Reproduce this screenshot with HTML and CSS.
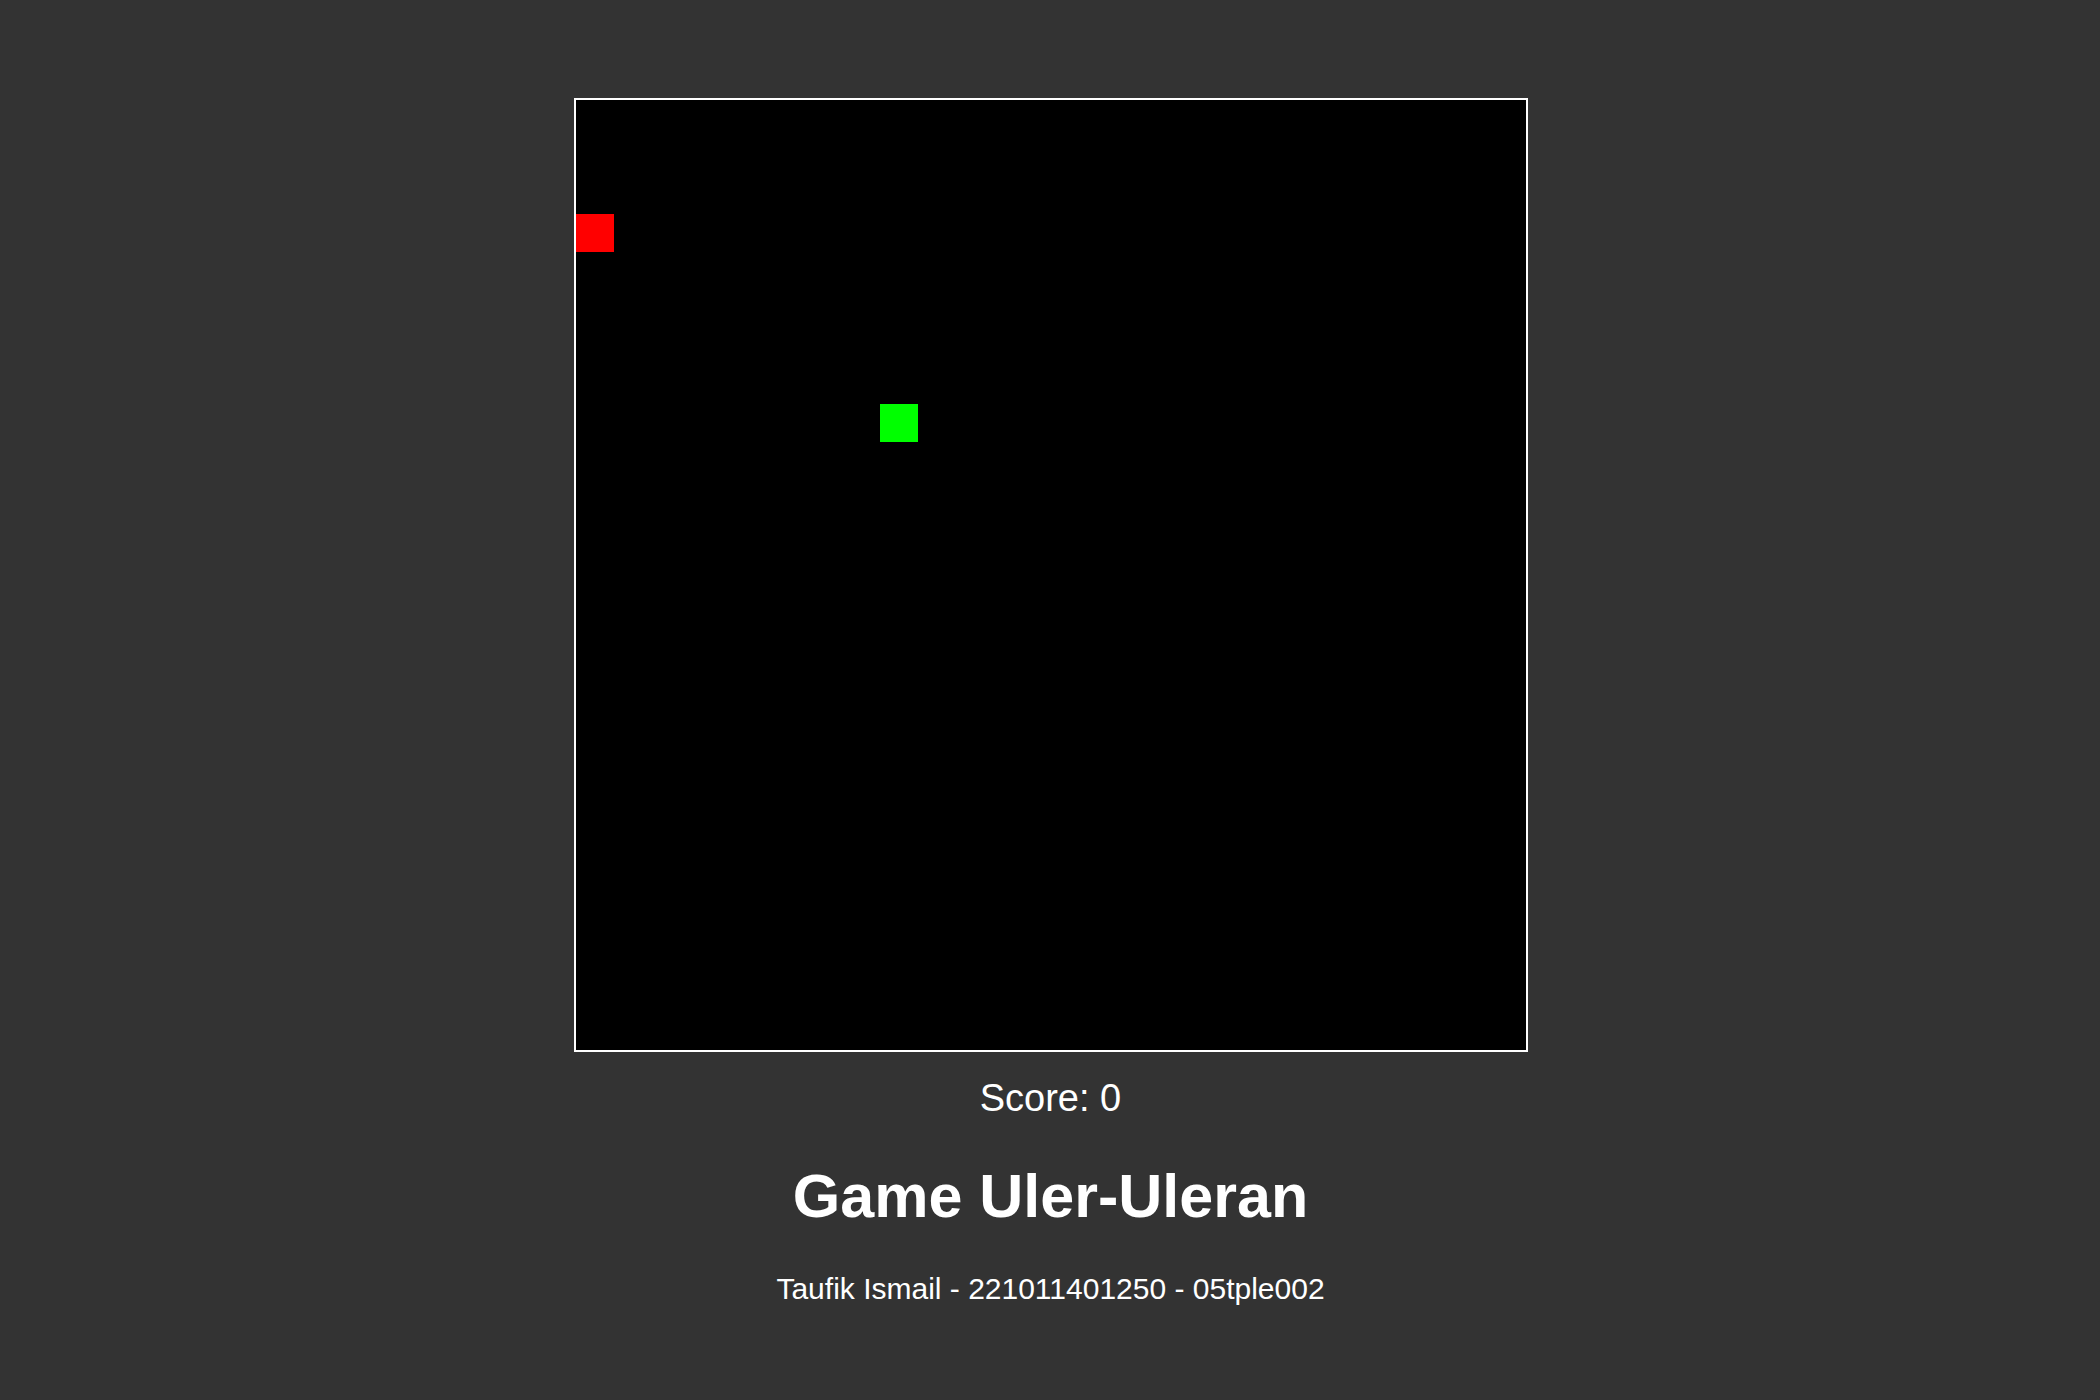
FILE: index.html
```html
<!DOCTYPE html>
<html lang="id">
<head>
<meta charset="utf-8">
<title>Game Uler-Uleran</title>
<link rel="stylesheet" href="styles.css">
</head>
<body>
<main class="page">
  <div class="board">
    <div class="cell food"></div>
    <div class="cell snake"></div>
  </div>
  <div class="score">Score: 0</div>
  <h1 class="title">Game Uler-Uleran</h1>
  <p class="credit">Taufik Ismail - 221011401250 - 05tple002</p>
</main>
</body>
</html>
```
FILE: styles.css
```css
html, body {
  margin: 0;
  padding: 0;
  background: #333333;
}
body {
  font-family: "Liberation Sans", Arial, sans-serif;
  color: #ffffff;
  width: 2100px;
  height: 1400px;
  overflow: hidden;
}
.page {
  display: flex;
  flex-direction: column;
  align-items: center;
  padding-top: 98px;
  padding-left: 1px;
}
.board {
  width: 950px;
  height: 950px;
  background: #000000;
  border: 2px solid #ffffff;
  display: grid;
  grid-template-columns: repeat(25, 38px);
  grid-template-rows: repeat(25, 38px);
}
.cell {
  width: 38px;
  height: 38px;
}
.food {
  background: #ff0000;
  grid-column: 1;
  grid-row: 4;
}
.snake {
  background: #00ff00;
  grid-column: 9;
  grid-row: 9;
}
.score {
  margin-top: 24px;
  font-size: 38px;
  line-height: 44px;
}
.title {
  margin: 41px 0 0;
  font-size: 61px;
  font-weight: bold;
  line-height: 70px;
}
.credit {
  margin: 41px 0 0;
  font-size: 30px;
  line-height: 34px;
}
```
